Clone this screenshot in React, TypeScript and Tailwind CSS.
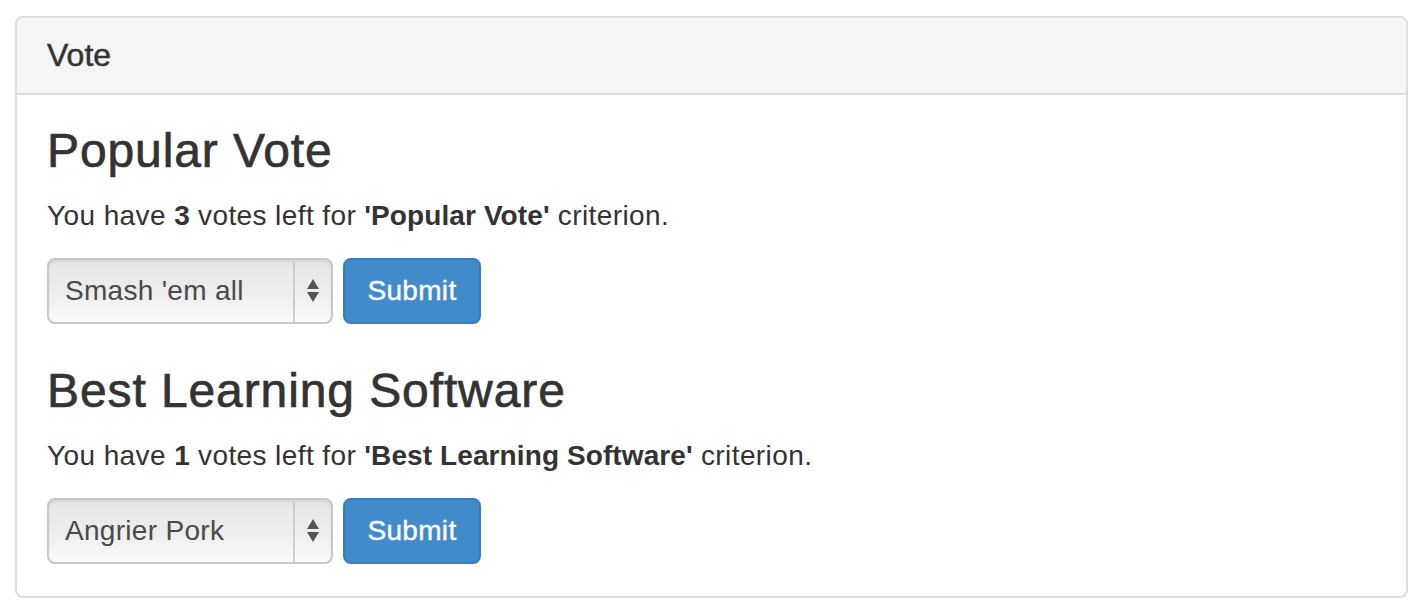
const criteria = [
  { title: "Popular Vote", left: 3, choice: "Smash 'em all" },
  { title: "Best Learning Software", left: 1, choice: "Angrier Pork" },
];

const SelectBox = ({ value }: { value: string }) => (
  <div className="flex h-[66px] w-[286px] items-stretch rounded-[8px] border-2 border-[#c8c8c8] bg-gradient-to-b from-[#e6e6e6] via-[#ededed] to-[#fbfbfb] shadow-[inset_0_2px_3px_rgba(0,0,0,0.08)]">
    <div className="flex flex-1 items-center pl-[16px] text-[28px] tracking-[0.3px] text-[#4a4a4a]">{value}</div>
    <div className="flex w-[38px] flex-col items-center justify-center gap-[3px] border-l-2 border-[#cfcfcf]">
      <svg width="12" height="10" viewBox="0 0 12 10">
        <path d="M6 0 L12 10 L0 10 Z" fill="#555" />
      </svg>
      <svg width="12" height="10" viewBox="0 0 12 10">
        <path d="M0 0 L12 0 L6 10 Z" fill="#555" />
      </svg>
    </div>
  </div>
);

export default function App() {
  return (
    <div className="bg-white pl-[15px] pr-[16px] pt-[16px] font-['Liberation_Sans',Arial,sans-serif] text-[#333]">
      <div className="rounded-[8px] border-2 border-[#dddddd]">
        <div className="rounded-t-[6px] border-b-2 border-[#dddddd] bg-[#f5f5f5] px-[30px] py-[20px]">
          <h2 className="text-[32px] leading-[1.1] [-webkit-text-stroke:0.5px_#333]">Vote</h2>
        </div>
        <div className="px-[30px] pt-[30px] pb-[32px]">
          {criteria.map((c, i) => (
            <div key={c.title} className={i > 0 ? "mt-[41px]" : ""}>
              <h3 className="mb-[18px] text-[48px] leading-[1.1] tracking-[0.9px] [-webkit-text-stroke:0.7px_#333]">
                {c.title}
              </h3>
              <p className="mb-[22px] text-[28px] leading-[40px] tracking-[0.4px]">
                You have <b className="tracking-[0.1px]">{c.left}</b> votes left for{" "}
                <b className="tracking-[0.1px]">'{c.title}'</b> criterion.
              </p>
              <div className="flex gap-[10px]">
                <SelectBox value={c.choice} />
                <button className="h-[66px] w-[138px] rounded-[8px] border-2 border-[#357ebd] bg-[#428bca] text-[28px] tracking-[0.3px] text-white [-webkit-text-stroke:0.4px_#fff]">
                  Submit
                </button>
              </div>
            </div>
          ))}
        </div>
      </div>
    </div>
  );
}
